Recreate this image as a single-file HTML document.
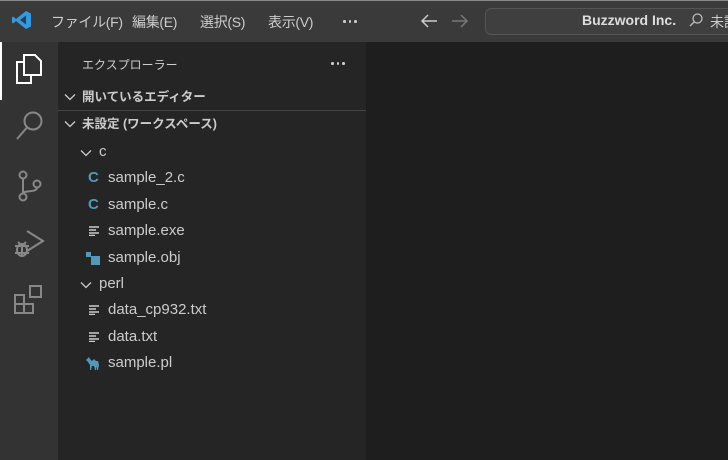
<!DOCTYPE html>
<html><head><meta charset="utf-8"><style>
body{margin:0;width:728px;height:460px;overflow:hidden;background:#1e1e1e;font-family:"Liberation Sans","Noto Sans CJK JP",sans-serif;position:relative}
.t{position:absolute;white-space:nowrap}
#title{position:absolute;left:0;top:0;width:728px;height:42px;background:#3a3a3a;border-top:1px solid #888;box-sizing:border-box}
#act{position:absolute;left:0;top:42px;width:58px;height:418px;background:#333}
#side{position:absolute;left:58px;top:42px;width:308px;height:418px;background:#252526}
.m{color:#ccc;font-size:14px;top:11px;letter-spacing:-0.3px}
.row{position:absolute;left:0;width:308px;height:26px;color:#ccc;font-size:15px;line-height:26px}
.row span,.row svg{position:absolute}
.dots{display:flex;gap:3px}
.dots i{width:2.5px;height:2.5px;background:#ccc;border-radius:50%;display:block}
#files{position:absolute;left:0;top:2px;width:308px;height:400px}
</style></head><body>
<div id="title">
<svg class="t" style="left:12px;top:9px" width="20" height="20" viewBox="0 0 20 20"><path d="M14 1 L19 3.5 V16.5 L14 19 L4 11 L1 13.5 L0 12.5 V7.5 L1 6.5 L4 9 Z M14 5.5 L8 10 L14 14.5Z" fill="#2f9be6" fill-rule="evenodd"/></svg>
<div class="t m" style="left:51px">ファイル(F)</div>
<div class="t m" style="left:132px">編集(E)</div>
<div class="t m" style="left:200px">選択(S)</div>
<div class="t m" style="left:268px">表示(V)</div>
<div class="t dots" style="left:343px;top:19px"><i></i><i></i><i></i></div>
<svg class="t" style="left:420px;top:12px" width="18" height="16" viewBox="0 0 18 16" fill="none" stroke="#ccc" stroke-width="1.5"><path d="M17 8 H2 M8 2 L2 8 L8 14"/></svg>
<svg class="t" style="left:451px;top:12px" width="18" height="16" viewBox="0 0 18 16" fill="none" stroke="#777" stroke-width="1.5"><path d="M1 8 H16 M10 2 L16 8 L10 14"/></svg>
<div class="t" style="left:485px;top:7px;width:260px;height:27px;border:1px solid #555;border-radius:6px;background:#3f3f3f;box-sizing:border-box"></div>
<div class="t" style="left:582px;top:11px;color:#ddd;font-size:14px;font-weight:bold">Buzzword Inc.</div>
<svg class="t" style="left:688px;top:11px" width="16" height="16" viewBox="0 0 16 16"><circle cx="9.5" cy="6.5" r="4.5" stroke="#bbb" stroke-width="1.3" fill="none"/><path d="M6.3 9.7 L2 14" stroke="#bbb" stroke-width="1.4"/></svg>
<div class="t" style="left:710px;top:11px;color:#ccc;font-size:14px">未設</div>
</div>
<div id="act">
<div class="t" style="left:0;top:0;width:2px;height:58px;background:#fff"></div>
<svg class="t" style="left:14px;top:10px" width="30" height="34" viewBox="0 0 30 34" fill="none" stroke="#fff" stroke-width="2"><path d="M10 3 H21 L27 9 V23 H10 Z"/><path d="M10 10 H3 V31 H17 V23"/></svg>
<svg class="t" style="left:15px;top:68px" width="30" height="32" viewBox="0 0 30 32" fill="none" stroke="#888" stroke-width="2"><circle cx="18" cy="11" r="8.5"/><path d="M12 17.5 L2 29"/></svg>
<svg class="t" style="left:16px;top:128px" width="28" height="32" viewBox="0 0 28 32" fill="none" stroke="#888" stroke-width="2"><circle cx="7" cy="5" r="3.5"/><circle cx="7" cy="27" r="3.5"/><circle cx="21" cy="14" r="3.5"/><path d="M7 8.5 V23.5 M21 17.5 C21 23 7 20 7 23.5"/></svg>
<svg class="t" style="left:13px;top:186px" width="32" height="32" viewBox="0 0 32 32" fill="none" stroke="#888" stroke-width="2"><path d="M14 3 L30 13 L14 23"/><ellipse cx="9" cy="22" rx="5" ry="6"/><path d="M2 18 H16 M2 25 H16 M9 16 V28 M5 14 L7 16 M13 14 L11 16"/></svg>
<svg class="t" style="left:13px;top:242px" width="32" height="32" viewBox="0 0 32 32" fill="none" stroke="#888" stroke-width="2"><path d="M2 11 H11 V29 H2 Z M2 20 H20 V29 H11"/><rect x="17" y="2" width="11" height="11"/></svg>
</div>
<div id="side">
<div class="t" style="left:24px;top:14px;color:#ccc;font-size:12px">エクスプローラー</div>
<div class="t dots" style="left:273px;top:20px"><i></i><i></i><i></i></div>
<div class="row" style="top:42px;font-weight:bold;font-size:12.5px"><svg style="left:6px;top:9px" width="12" height="8" viewBox="0 0 12 8" fill="none" stroke="#ccc" stroke-width="1.3"><path d="M1 1.5 L6 6.5 L11 1.5"/></svg><span style="left:24px">開いているエディター</span></div>
<div class="t" style="left:0;top:68px;width:308px;height:1px;background:#444"></div>
<div class="row" style="top:69px;font-weight:bold;font-size:12.5px"><svg style="left:6px;top:9px" width="12" height="8" viewBox="0 0 12 8" fill="none" stroke="#ccc" stroke-width="1.3"><path d="M1 1.5 L6 6.5 L11 1.5"/></svg><span style="left:24px">未設定 (ワークスペース)</span></div>
<div id="files">
<div class="row" style="top:95px"><svg style="left:22px;top:10px" width="12" height="8" viewBox="0 0 12 8" fill="none" stroke="#ccc" stroke-width="1.3"><path d="M1 1.5 L6 6.5 L11 1.5"/></svg><span style="left:41px">c</span></div>
<div class="row" style="top:121px"><span style="left:30px;color:#519aba;font-weight:bold">C</span><span style="left:50px">sample_2.c</span></div>
<div class="row" style="top:148px"><span style="left:30px;color:#519aba;font-weight:bold">C</span><span style="left:50px">sample.c</span></div>
<div class="row" style="top:174px"><svg style="left:31px;top:8px" width="11" height="10" viewBox="0 0 11 10" stroke="#ccc" stroke-width="1.4"><path d="M0 1H10M0 4H7M0 7H10M0 9.5H6"/></svg><span style="left:50px">sample.exe</span></div>
<div class="row" style="top:201px"><span style="left:28px;top:7px;width:5px;height:5px;background:#519aba"></span><span style="left:33px;top:11px;width:9px;height:9px;background:#519aba"></span><span style="left:50px">sample.obj</span></div>
<div class="row" style="top:227px"><svg style="left:22px;top:10px" width="12" height="8" viewBox="0 0 12 8" fill="none" stroke="#ccc" stroke-width="1.3"><path d="M1 1.5 L6 6.5 L11 1.5"/></svg><span style="left:41px">perl</span></div>
<div class="row" style="top:253px"><svg style="left:31px;top:8px" width="11" height="10" viewBox="0 0 11 10" stroke="#ccc" stroke-width="1.4"><path d="M0 1H10M0 4H7M0 7H10M0 9.5H6"/></svg><span style="left:50px">data_cp932.txt</span></div>
<div class="row" style="top:280px"><svg style="left:31px;top:8px" width="11" height="10" viewBox="0 0 11 10" stroke="#ccc" stroke-width="1.4"><path d="M0 1H10M0 4H7M0 7H10M0 9.5H6"/></svg><span style="left:50px">data.txt</span></div>
<div class="row" style="top:306px"><svg style="left:28px;top:6px" width="14" height="15" viewBox="0 0 14 15" fill="#519aba"><path d="M0 4 L3 1 L4 3 L6 5 L8 3 L10 5 L12 5 L13 9 L12 14 H11 L11 10 L10 14 H9 L8 10 L6 10 L5 14 H4 L4 9 L2 6 Z"/></svg><span style="left:50px">sample.pl</span></div>
</div>
</div>
</body></html>
